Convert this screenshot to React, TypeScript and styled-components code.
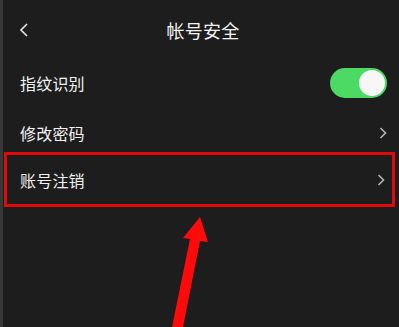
import React from "react";
import styled, { createGlobalStyle } from "styled-components";

const GlobalStyle = createGlobalStyle`
  html, body {
    margin: 0;
    padding: 0;
    background: #1d1d1d;
  }
  body {
    font-family: "Noto Sans CJK SC", "Noto Sans", sans-serif;
    color: #f2f2f2;
  }
`;

const Screen = styled.div`
  position: relative;
  width: 399px;
  height: 327px;
  overflow: hidden;
  background: #1d1d1d;
  border-left: 3px solid #383838;
  box-sizing: border-box;
`;

const Header = styled.div`
  position: relative;
  height: 58px;
  display: flex;
  align-items: center;
  justify-content: center;
`;

const BackButton = styled.div`
  position: absolute;
  left: 14px;
  top: 22px;
  width: 14px;
  height: 16px;
  display: flex;
  align-items: center;
  justify-content: center;
`;

const Title = styled.div`
  font-size: 18px;
  line-height: 1;
  margin-left: 4px;
  margin-top: 2px;
  letter-spacing: 0.3px;
`;

const List = styled.div`
  display: flex;
  flex-direction: column;
`;

const Row = styled.div<{ $height: number; $shift?: number }>`
  height: ${(p) => p.$height}px;
  box-sizing: border-box;
  display: flex;
  align-items: center;
  justify-content: space-between;
  padding: ${(p) => p.$shift ?? 0}px 12px 0 17px;
`;

const Highlight = styled.div`
  margin: 0 4px 0 1px;
  border: 3px solid #e10a0a;
  height: 49px;
  display: flex;
  align-items: center;
  justify-content: space-between;
  padding: 0 7px 0 13px;
`;

const Label = styled.span`
  font-size: 16px;
  line-height: 1;
  letter-spacing: 0.2px;
`;

const Toggle = styled.div<{ $on: boolean }>`
  width: 57px;
  height: 30px;
  border-radius: 15px;
  background: ${(p) => (p.$on ? "#4cd964" : "#444")};
  position: relative;
`;

const Knob = styled.div<{ $on: boolean }>`
  position: absolute;
  top: 2px;
  left: ${(p) => (p.$on ? "29px" : "2px")};
  width: 26px;
  height: 26px;
  border-radius: 50%;
  background: #f7f7f7;
`;

const Arrow = styled.svg`
  position: absolute;
  left: 0;
  top: 0;
  pointer-events: none;
`;

const Chevron = () => (
  <svg width="8" height="12" viewBox="0 0 8 12">
    <path d="M1.5 1 L6.5 6 L1.5 11" fill="none" stroke="#b5b5b5" strokeWidth="1.6" />
  </svg>
);

export default function App() {
  return (
    <>
      <GlobalStyle />
      <Screen>
        <Header>
          <BackButton>
            <svg width="10" height="14" viewBox="0 0 10 14">
              <path d="M8 1 L2 7 L8 13" fill="none" stroke="#e8e8e8" strokeWidth="1.6" />
            </svg>
          </BackButton>
          <Title>帐号安全</Title>
        </Header>
        <List>
          <Row $height={50}>
            <Label>指纹识别</Label>
            <Toggle $on>
              <Knob $on />
            </Toggle>
          </Row>
          <Row $height={44} $shift={6}>
            <Label>修改密码</Label>
            <Chevron />
          </Row>
          <Highlight>
            <Label>账号注销</Label>
            <Chevron />
          </Highlight>
        </List>
        <Arrow width="399" height="327" viewBox="0 0 399 327">
          <polygon
            points="200,217 208,242 200,241 183,327 172,327 190,239 183,238"
            fill="#ff0a0a"
            transform="translate(-3 0)"
          />
        </Arrow>
      </Screen>
    </>
  );
}
